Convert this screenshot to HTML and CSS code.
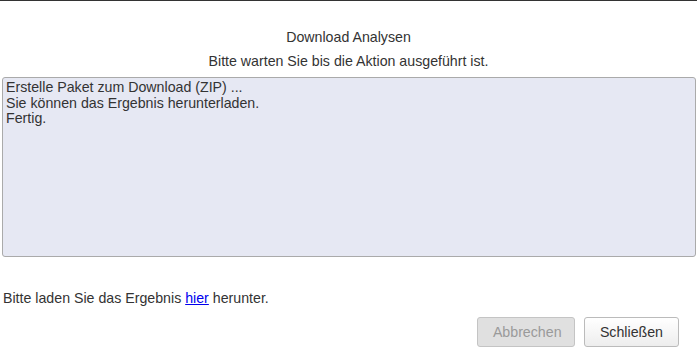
FILE: index.html
```html
<!DOCTYPE html>
<html lang="de">
<head>
    <meta charset="UTF-8">
    <title>Download Analysen</title>
    <link rel="stylesheet" href="styles.css">
</head>
<body>
    <div class="dialog">
        <div class="title">Download Analysen</div>
        <div class="subtitle">Bitte warten Sie bis die Aktion ausgeführt ist.</div>
        <textarea class="log" readonly>Erstelle Paket zum Download (ZIP) ...
Sie können das Ergebnis herunterladen.
Fertig.</textarea>
        <p class="hint">Bitte laden Sie das Ergebnis <a href="#">hier</a> herunter.</p>
        <div class="actions">
            <button class="btn" disabled>Abbrechen</button>
            <button class="btn">Schließen</button>
        </div>
    </div>
</body>
</html>
```

FILE: styles.css
```css
body {
    margin: 0;
    font-family: "Liberation Sans", Arial, sans-serif;
    font-size: 14.2px;
    color: #333;
    background: #fff;
}

.dialog {
    border-top: 1px solid #333;
    padding: 0 2px 0 2px;
}

.title {
    text-align: center;
    margin-top: 28px;
    line-height: 16px;
}

.subtitle {
    text-align: center;
    margin-top: 8px;
    line-height: 16px;
}

.log {
    display: block;
    box-sizing: border-box;
    width: 694px;
    height: 180px;
    margin-top: 8px;
    padding: 2px 3px;
    border: 1px solid #aaa;
    border-radius: 3px;
    background: #e6e8f3;
    color: #333;
    font-family: "Liberation Sans", Arial, sans-serif;
    font-size: 14.2px;
    line-height: 15.5px;
    resize: none;
    outline: none;
}

.hint {
    margin: 34px 0 0 1px;
    line-height: 15px;
}

.hint a {
    color: #00e;
}

.actions {
    display: flex;
    justify-content: flex-end;
    gap: 9px;
    margin-top: 11px;
    padding-right: 16px;
}

.btn {
    height: 30px;
    padding: 0 15px;
    border: 1px solid #bbb;
    border-radius: 3px;
    background: linear-gradient(#fff, #ededed);
    color: #333;
    font-family: "Liberation Sans", Arial, sans-serif;
    font-size: 14.2px;
}

.btn:disabled {
    background: #e0e0e0;
    border-color: #c4c4c4;
    color: #9a9a9a;
    width: 98px;
}
```
